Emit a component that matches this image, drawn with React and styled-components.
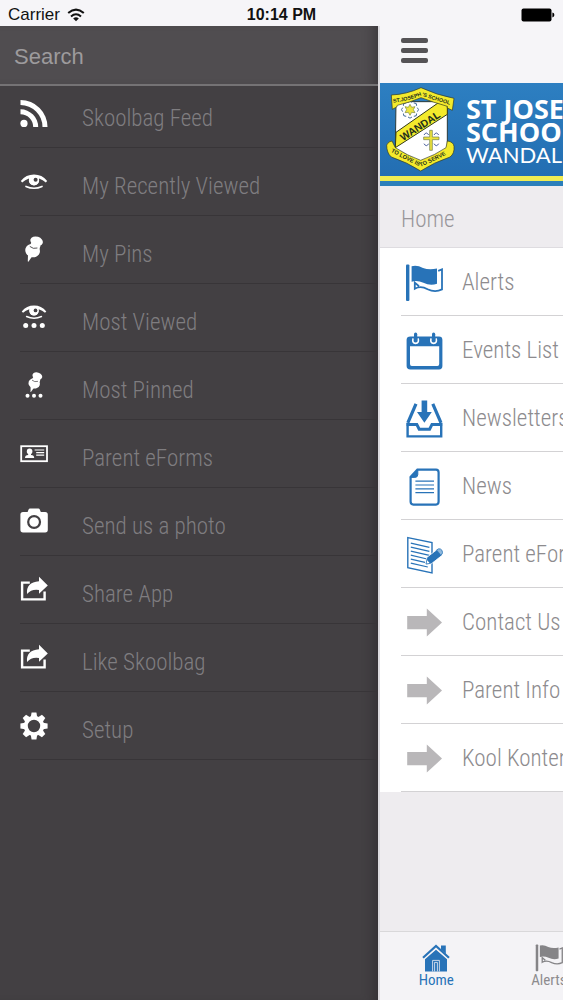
import React from 'react'
import styled, { createGlobalStyle } from 'styled-components'

const GlobalStyle = createGlobalStyle`
  * {
    box-sizing: border-box;
  }
  body {
    margin: 0;
    background: #f6f5f8;
    font-family: 'Roboto Condensed', Roboto, sans-serif;
  }
`

/* ---------- drawer icons, 28 x 28 ---------- */

const FeedIcon = () => (
  <svg viewBox="0 0 28 28" width="28" height="28" fill="#fff" aria-hidden="true">
    <circle cx="4" cy="23.4" r="3.6" />
    <path d="M0.5 9.3 A17.7 17.7 0 0 1 18.2 27 h-5 A12.7 12.7 0 0 0 0.5 14.3z" />
    <path d="M0.5 0 A27 27 0 0 1 27.5 27 h-5 A22 22 0 0 0 0.5 5z" />
  </svg>
)

const Eye = () => (
  <g>
    <path d="M0.8 7 Q6 0.6 14 0.6 Q22 0.6 27.2 7 L25.8 8.4 Q23 6 19 4.6 A5.2 5.2 0 1 1 9 4.6 Q5 6 2.2 8.4z" fill="#fff" />
    <circle cx="14" cy="6.4" r="5" fill="#fff" />
    <circle cx="15.6" cy="5.8" r="2" fill="#434043" />
    <path d="M6 12.4 Q14 16 22 12.4" fill="none" stroke="#fff" strokeWidth="1.6" strokeLinecap="round" />
  </g>
)

const Pin = () => (
  <g fill="#fff">
    <ellipse cx="16.6" cy="5.2" rx="6.4" ry="4.6" transform="rotate(18 16.6 5.2)" />
    <path d="M11.4 6.4 L20.6 9.4 L19.4 13 L9 11z" />
    <ellipse cx="12.6" cy="14.6" rx="7.4" ry="6.6" transform="rotate(18 12.6 14.6)" />
    <path d="M8 18.6 L12 20.6 L8.4 25.8 L7.8 25.6z" />
    <path d="M9.8 10.4 Q13 13.4 17.4 12" fill="none" stroke="#434043" strokeWidth="0.9" />
  </g>
)

const EyeIcon = () => (
  <svg viewBox="0 0 28 28" width="28" height="28" aria-hidden="true">
    <g transform="translate(0 6)"><Eye /></g>
  </svg>
)

const PinIcon = () => (
  <svg viewBox="0 0 28 28" width="28" height="28" aria-hidden="true"><Pin /></svg>
)

const MostViewedIcon = () => (
  <svg viewBox="0 0 28 28" width="28" height="28" fill="#fff" aria-hidden="true">
    <g transform="translate(1 1) scale(0.93)"><Eye /></g>
    <circle cx="5.7" cy="21.6" r="2.5" />
    <circle cx="14" cy="21.6" r="2.5" />
    <circle cx="22.3" cy="21.6" r="2.5" />
  </svg>
)

const MostPinnedIcon = () => (
  <svg viewBox="0 0 28 28" width="28" height="28" fill="#fff" aria-hidden="true">
    <g transform="translate(4.4 0) scale(0.78)"><Pin /></g>
    <circle cx="7.5" cy="23.8" r="2" />
    <circle cx="14" cy="23.8" r="2" />
    <circle cx="20.5" cy="23.8" r="2" />
  </svg>
)

const CardIcon = () => (
  <svg viewBox="0 0 28 28" width="28" height="28" fill="#fff" aria-hidden="true">
    <rect x="1.2" y="6.2" width="25.8" height="15" fill="none" stroke="#fff" strokeWidth="1.8" />
    <circle cx="9.6" cy="11.4" r="2.8" />
    <path d="M5 18 Q5 15.2 8.2 15 V13 h2.8 V15 Q14.2 15.2 14.2 18z" />
    <path d="M14.6 10 h9.6 M16.2 12.6 h8 M16.2 15.2 h8" stroke="#fff" strokeWidth="1.2" />
  </svg>
)

const CameraIcon = () => (
  <svg viewBox="0 0 28 28" width="28" height="28" aria-hidden="true">
    <path fill="#fff" d="M3 4 H7.6 L8.6 1.4 Q9 0.4 10 0.4 H18.4 Q19.4 0.4 19.8 1.4 L20.8 4 H25.2 Q27.8 4 27.8 6.6 V21.8 Q27.8 24.4 25.2 24.4 H3 Q0.4 24.4 0.4 21.8 V6.6 Q0.4 4 3 4z" />
    <circle cx="14.1" cy="14" r="5.9" fill="#fff" stroke="#434043" strokeWidth="2.2" />
  </svg>
)

const ShareIcon = () => (
  <svg viewBox="0 0 28 28" width="28" height="28" aria-hidden="true">
    <path d="M9.8 6.6 H2.1 V23.4 H24.6 V15.6" fill="none" stroke="#fff" strokeWidth="2.4" />
    <path d="M19 0.8 L27.8 9.6 L19 17.8 V14 Q11.4 12.8 7 18 Q5.8 6.4 19 5.2z" fill="#fff" />
  </svg>
)

const GearIcon = () => (
  <svg viewBox="0 0 28 28" width="28" height="28" fill="#fff" aria-hidden="true">
    {[0, 45, 90, 135, 180, 225, 270, 315].map((a) => (
      <path key={a} d="M10.8 5 L11.6 0.4 H16.4 L17.2 5z" transform={`rotate(${a} 14 14)`} />
    ))}
    <circle cx="14" cy="14" r="8.2" fill="none" stroke="#fff" strokeWidth="4" />
  </svg>
)

/* ---------- school page icons ---------- */

const FlagIcon = ({ size, color }) => (
  <svg viewBox="0 0 38 38" width={size} height={size} fill={color} aria-hidden="true">
    <rect x="1" y="0.6" width="3.4" height="36.4" rx="1" />
    <path d="M6.6 2.2 Q12 0.6 18 4 Q24 6.4 32 4.6 V19.8 Q25 22 18.4 18.8 Q12 15.8 6.6 17.8z" />
    <path
      d="M33.2 6.8 L37 5.4 V25.4 Q30 28.8 22.6 25.2 Q15.6 21.4 9.8 24.8 V18.6 L14 22.2"
      fill="none"
      stroke={color}
      strokeWidth="1.8"
    />
  </svg>
)

const CalendarIcon = () => (
  <svg viewBox="0 0 38 38" width="38" height="38" fill="#2873b8" aria-hidden="true">
    <path
      fillRule="evenodd"
      d="M5.4 4.4 H34 Q37.4 4.4 37.4 7.8 V34 Q37.4 37.4 34 37.4 H5.4 Q1.6 37.4 1.6 34 V7.8 Q1.6 4.4 5.4 4.4z M5 14.2 V32 Q5 34 6.8 34 H32.4 Q34.2 34 34.2 32 V14.2z"
    />
    <g fill="none" stroke="#fff" strokeWidth="1.6">
      <path d="M8 6.4 Q7 11.4 10.6 11.4 Q14.2 11.4 13.2 6.4" />
      <path d="M26 6.4 Q25 11.4 28.6 11.4 Q32.2 11.4 31.2 6.4" />
    </g>
    <rect x="9" y="0.6" width="3.2" height="9" rx="1.6" />
    <rect x="27" y="0.6" width="3.2" height="9" rx="1.6" />
  </svg>
)

const InboxIcon = () => (
  <svg viewBox="0 0 38 38" width="38" height="38" fill="none" stroke="#2873b8" strokeWidth="2.4" aria-hidden="true">
    <path d="M2.6 23 V36.4 H36.2 V23" />
    <path d="M1.6 24.4 H11.8 L14.2 29.2 H24.6 L27 24.4 H37.2" strokeWidth="3" />
    <path d="M2.8 22.8 L11 3.8 M36 22.8 L27.8 3.8" strokeWidth="3.2" />
    <path d="M16.6 0.4 H22.2 V12 H26.8 L19.4 22.8 L12 12 H16.6z" fill="#2873b8" stroke="none" />
  </svg>
)

const PageIcon = () => (
  <svg viewBox="0 0 38 38" width="38" height="38" fill="none" stroke="#2873b8" aria-hidden="true">
    <path d="M12.4 1.6 H31 Q33.6 1.6 33.6 4.4 V33.6 Q33.6 36.6 31 36.6 H8.4 Q5.6 36.6 5.6 33.6 V9z" strokeWidth="2.2" />
    <path d="M12.8 1.4 V6.6 Q12.8 9.4 9.8 9.4 H5.4z" fill="#2873b8" />
    <path d="M10.4 13.2 h18.6 M10.4 17 h18.6 M10.4 20.8 h18.6 M10.4 24.6 h18.6" strokeWidth="1.2" />
  </svg>
)

const FormIcon = () => (
  <svg viewBox="0 0 38 38" width="38" height="38" fill="none" stroke="#2873b8" aria-hidden="true">
    <path d="M2.8 1.6 L27 6.6 V37 L2.8 31.8z" strokeWidth="1.4" />
    <path
      d="M5.8 7.2 L24.4 11.4 M5.8 11.2 L24.4 15.4 M5.8 15.2 L24.4 19.4 M5.8 19.2 L22 23 M5.8 23.2 L20 26.4 M5.8 27.2 L22.8 31"
      strokeWidth="1.2"
    />
    <path d="M20.8 28.4 L21.8 21.4 L32 13.6 L36.8 19.6 L26.6 27.6z" fill="#2873b8" stroke="#fff" strokeWidth="0.8" />
    <path d="M21 28 L22 23.4 L25.4 27.4z" fill="#fff" strokeWidth="0.8" />
    <path d="M31.6 14 L33.6 12.8 Q35.6 12.4 37 14.4 Q38 16.6 37 18.2 L35.8 19.2z" fill="#8fb8dc" strokeWidth="0.8" />
  </svg>
)

const ArrowIcon = () => (
  <svg viewBox="0 0 38 38" width="38" height="38" fill="#b9b7b9" aria-hidden="true">
    <path d="M2.2 12 H21.8 V4.6 L37 18.6 L21.8 32.6 V25.2 H2.2z" />
  </svg>
)

const HouseIcon = () => (
  <svg viewBox="0 0 28 28" width="28" height="28" fill="#2873b8" aria-hidden="true">
    <path d="M19 1.6 h4.8 V12 L19 7z" />
    <path d="M3 14.6 L14 5 L25 14.6 V27.4 H3z" />
    <path d="M1 14.8 L14 3.4 L27 14.8" fill="none" stroke="#f4f3f6" strokeWidth="3.4" />
    <path d="M1 13.8 L14 2 L27 13.8" fill="none" stroke="#2873b8" strokeWidth="2.2" />
    <path d="M10.6 27.4 V16.4 H17.4 V27.4 M12.6 27.4 V18.4 H15.4 V27.4" fill="none" stroke="#f4f3f6" strokeWidth="0.8" />
  </svg>
)

const WifiIcon = () => (
  <svg viewBox="0 0 18 14" width="18" height="14" fill="none" stroke="#111" strokeWidth="2" aria-hidden="true">
    <path d="M1.2 5 Q9 -1.8 16.8 5" />
    <path d="M4 8.4 Q9 4 14 8.4" />
    <path d="M9 13.2 L6.2 10.4 Q9 8 11.8 10.4z" fill="#111" stroke="none" />
  </svg>
)

const BatteryIcon = () => (
  <svg viewBox="0 0 34 14" width="34" height="14" aria-hidden="true">
    <rect x="0.5" y="0.5" width="30" height="13" rx="2" fill="#000" />
    <path d="M31.4 4.6 Q33.4 5 33.4 7 Q33.4 9 31.4 9.4z" fill="#000" />
  </svg>
)

const Crest = () => (
  <svg viewBox="45 30 216 264" width="72" height="88" role="img" aria-label="School crest">
    <defs>
      <path id="ribbon-top" d="M70 83 Q112 78 153 62 Q196 76 248 92" />
      <path id="ribbon-foot" d="M62 230 Q108 256 152 275 Q196 258 248 228" />
    </defs>
    <path d="M78 80 H232 V222 L152 262 L76 222z" fill="#fff" stroke="#2a3a3a" strokeWidth="3" />
    {/* sun */}
    <g fill="none" stroke="#4a6f9c" strokeWidth="3">
      {[0, 45, 90, 135, 180, 225, 270, 315].map((a) => (
        <path key={a} d="M114 82 q6 -7 12 0" transform={`rotate(${a} 120 104)`} />
      ))}
    </g>
    <path
      d="M120 88 L125 97 L135 95 L130 104 L135 113 L125 112 L120 121 L115 112 L105 113 L110 104 L105 95 L115 97z"
      fill="#eee53a"
      stroke="#7c8a3c"
      strokeWidth="2"
    />
    <path d="M78 172 L204 84 L232 90 V118 L76 218z" fill="#f3ea2c" stroke="#333a1c" strokeWidth="3" />
    {/* cross */}
    <path
      d="M162 180 q7 -12 14 0 M192 180 q7 -12 14 0 M162 206 q7 12 14 0 M192 206 q7 12 14 0"
      fill="none"
      stroke="#4a5f9c"
      strokeWidth="3"
    />
    <path
      d="M179 166 h8 v20 h20 v8 h-20 v32 h-8 v-32 h-18 v-8 h18z"
      fill="#ece33a"
      stroke="#6c7a4c"
      strokeWidth="2"
    />
    <path
      d="M64 60 Q110 58 153 38 Q200 60 252 70 L247 106 L232 99 V94 Q190 82 153 68 Q120 82 82 91 L80 96 L67 103z"
      fill="#f3ea2c"
      stroke="#333a1c"
      strokeWidth="2"
    />
    <path
      d="M50 210 Q56 198 66 198 L76 218 Q112 242 152 256 Q196 240 228 218 L232 198 Q250 200 252 214 Q254 236 240 246 Q192 262 152 288 Q112 262 64 246 Q50 234 50 210z"
      fill="#f3ea2c"
      stroke="#333a1c"
      strokeWidth="2"
    />
    <g fill="#23301c" fontFamily="Liberation Sans, sans-serif" fontWeight="bold">
      <text fontSize="16"><textPath href="#ribbon-top">ST.JOSEPH'S SCHOOL</textPath></text>
      <text fontSize="31" textAnchor="middle" transform="translate(156 162) rotate(-33)">WANDAL</text>
      <text fontSize="17"><textPath href="#ribbon-foot">TO LOVE IS TO SERVE</textPath></text>
    </g>
  </svg>
)

const drawerItems = [
  { label: 'Skoolbag Feed', icon: <FeedIcon /> },
  { label: 'My Recently Viewed', icon: <EyeIcon /> },
  { label: 'My Pins', icon: <PinIcon /> },
  { label: 'Most Viewed', icon: <MostViewedIcon /> },
  { label: 'Most Pinned', icon: <MostPinnedIcon /> },
  { label: 'Parent eForms', icon: <CardIcon /> },
  { label: 'Send us a photo', icon: <CameraIcon /> },
  { label: 'Share App', icon: <ShareIcon /> },
  { label: 'Like Skoolbag', icon: <ShareIcon /> },
  { label: 'Setup', icon: <GearIcon /> },
]

const pageItems = [
  { label: 'Alerts', icon: <FlagIcon size={38} color="#2873b8" /> },
  { label: 'Events List', icon: <CalendarIcon /> },
  { label: 'Newsletters', icon: <InboxIcon /> },
  { label: 'News', icon: <PageIcon /> },
  { label: 'Parent eForms', icon: <FormIcon /> },
  { label: 'Contact Us', icon: <ArrowIcon /> },
  { label: 'Parent Info', icon: <ArrowIcon /> },
  { label: 'Kool Kontent', icon: <ArrowIcon /> },
]

const App = () => {
  return (
    <Screen>
      <GlobalStyle />
      <StatusBar>
        <Carrier>Carrier <WifiIcon /></Carrier>
        <Time>10:14 PM</Time>
        <Battery><BatteryIcon /></Battery>
      </StatusBar>
      <Body>
        <Drawer>
          <SearchInput type="search" placeholder="Search" aria-label="Search" />
          <DrawerList>
            {drawerItems.map((item) => (
              <li key={item.label}>
                <DrawerLink href="#">
                  <DrawerIcon>{item.icon}</DrawerIcon>
                  <span>{item.label}</span>
                </DrawerLink>
              </li>
            ))}
          </DrawerList>
        </Drawer>

        <Page>
          <TopBar>
            <MenuButton aria-label="Menu"><i /><i /><i /></MenuButton>
          </TopBar>
          <Banner>
            <BannerMain>
              <Crest />
              <SchoolName>
                <b>ST JOSEPH'S</b>
                <b>SCHOOL</b>
                <span>WANDAL</span>
              </SchoolName>
            </BannerMain>
          </Banner>
          <PageTitle>Home</PageTitle>
          <PageList>
            {pageItems.map((item) => (
              <li key={item.label}>
                <PageLink href="#">
                  {item.icon}
                  <span>{item.label}</span>
                </PageLink>
              </li>
            ))}
          </PageList>
          <TabBar>
            <Tab $active><HouseIcon />Home</Tab>
            <Tab><FlagIcon size={28} color="#858487" />Alerts</Tab>
          </TabBar>
        </Page>
      </Body>
    </Screen>
  )
}

const Screen = styled.div`
  display: flex;
  flex-direction: column;
  min-height: 100vh;
  overflow: hidden;
`

const StatusBar = styled.header`
  display: grid;
  grid-template-columns: 1fr auto 1fr;
  align-items: center;
  height: 26px;
  padding: 3px 8px 0;
  background: #f6f5f8;
  color: #111;
  font-family: 'Liberation Sans', sans-serif;
  font-size: 17px;
  line-height: 20px;
`

const Carrier = styled.div`
  display: flex;
  align-items: center;
  gap: 7px;
`

const Time = styled.time`
  font-size: 16px;
  font-weight: bold;
`

const Battery = styled.div`
  display: flex;
  justify-content: flex-end;
`

const Body = styled.div`
  display: flex;
  flex: 1;
`

const Drawer = styled.nav`
  flex: 1;
  min-width: 0;
  background: #434043;
  box-shadow: inset -12px 0 12px -8px rgba(30, 26, 30, 0.4);
`

const SearchInput = styled.input`
  display: block;
  width: 100%;
  height: 60px;
  padding: 4px 14px 0;
  border: 0;
  border-bottom: 2px solid #757375;
  border-radius: 0;
  outline: 0;
  background: #504d50;
  box-shadow: inset -12px 0 12px -8px rgba(30, 26, 30, 0.4);
  color: #fff;
  font-family: 'Liberation Sans', sans-serif;
  font-size: 22px;
  &::placeholder {
    color: #9d9b9d;
    opacity: 1;
  }
`

const DrawerList = styled.ul`
  margin: 0;
  padding: 0 0 0 20px;
  list-style: none;
`

const DrawerLink = styled.a`
  display: flex;
  align-items: flex-end;
  gap: 34px;
  height: 68px;
  padding-bottom: 14px;
  border-bottom: 1px solid #383538;
  color: #7f7d80;
  font-size: 23px;
  font-weight: 300;
  line-height: 28px;
  text-decoration: none;
  white-space: nowrap;
  li:first-child & {
    height: 62px;
  }
`

const DrawerIcon = styled.span`
  display: flex;
  padding-bottom: 5px;
`

const Page = styled.main`
  display: flex;
  flex-direction: column;
  flex: 0 0 185px;
  min-width: 0;
  overflow: hidden;
  border-left: 2px solid #dedce0;
  background: #eeecef;
`

const TopBar = styled.div`
  display: flex;
  align-items: center;
  height: 57px;
  padding: 0 21px;
  background: #f6f5f8;
`

const MenuButton = styled.button`
  display: flex;
  flex-direction: column;
  gap: 5px;
  margin-bottom: 8px;
  padding: 0;
  border: 0;
  background: none;
  cursor: pointer;
  i {
    width: 27px;
    height: 5px;
    border-radius: 2px;
    background: #555356;
  }
`

const Banner = styled.div`
  padding-bottom: 5px;
  background: #2b7fbb;
`

const BannerMain = styled.div`
  display: flex;
  align-items: flex-start;
  gap: 9px;
  height: 98px;
  padding: 2px 0 0 5px;
  border-bottom: 5px solid #f0ec52;
  background: linear-gradient(#2d7fc1, #236eb2);
  svg {
    flex: none;
  }
`

const SchoolName = styled.div`
  display: flex;
  flex-direction: column;
  padding-top: 12px;
  color: #fff;
  font-family: 'Open Sans', sans-serif;
  font-size: 27px;
  line-height: 23px;
  white-space: nowrap;
  span {
    font-family: Lato, sans-serif;
    font-size: 22px;
    line-height: 24px;
  }
`

const PageTitle = styled.h1`
  margin: 0;
  padding: 20px 21px 13px;
  border-bottom: 1px solid #dedce0;
  color: #98969a;
  font-size: 23px;
  font-weight: 300;
  line-height: 28px;
`

const PageList = styled.ul`
  margin: 0;
  padding: 0 0 0 21px;
  background: #fff;
  list-style: none;
`

const PageLink = styled.a`
  display: flex;
  align-items: center;
  gap: 19px;
  height: 68px;
  padding: 2px 0 0 4px;
  border-bottom: 1px solid #d3d2d4;
  color: #8d8b8e;
  font-size: 23px;
  font-weight: 300;
  line-height: 28px;
  text-decoration: none;
  white-space: nowrap;
  svg {
    flex: none;
  }
`

const TabBar = styled.div`
  display: flex;
  height: 69px;
  margin-top: auto;
  border-top: 1px solid #d9d8da;
  background: #f4f3f6;
`

const Tab = styled.button`
  display: flex;
  flex: 0 0 20vw;
  flex-direction: column;
  align-items: center;
  padding: 12px 0 0;
  border: 0;
  background: none;
  color: ${(props) => (props.$active ? '#2873b8' : '#8d8b8e')};
  cursor: pointer;
  font-family: inherit;
  font-size: 15px;
  line-height: 16px;
`

export default App
